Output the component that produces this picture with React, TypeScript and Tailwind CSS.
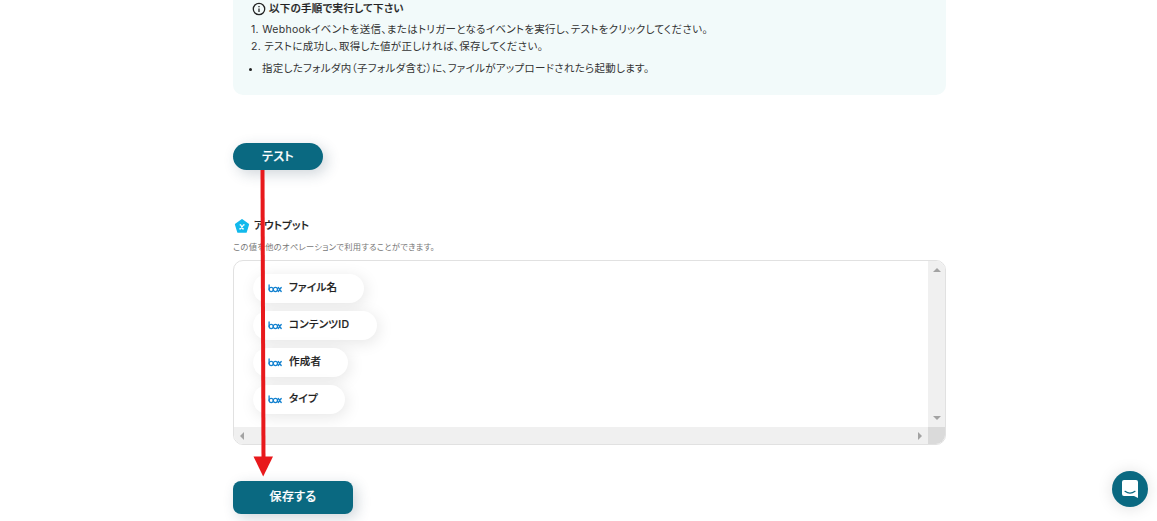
type OutputItem = {
  label: string;
  width: string;
};

const outputs: OutputItem[] = [
  { label: 'ファイル名', width: 'w-[111px]' },
  { label: 'コンテンツID', width: 'w-[124px]' },
  { label: '作成者', width: 'w-[95px]' },
  { label: 'タイプ', width: 'w-[92px]' },
];

function InfoIcon() {
  return (
    <svg width="14" height="14" viewBox="0 0 24 24" className="shrink-0" fill="none" stroke="#222" strokeWidth="2.2">
      <circle cx="12" cy="12" r="9.8" />
      <path d="M12 11v6" />
      <path d="M12 7v2" />
    </svg>
  );
}

function OutputIcon() {
  return (
    <svg width="16" height="16" viewBox="0 0 16 16" className="shrink-0">
      <path
        d="M8 1.9 14.3 6.5 12 14H4L1.7 6.5Z"
        fill="#12b9ec"
        stroke="#12b9ec"
        strokeWidth="1.6"
        strokeLinejoin="round"
      />
      <path
        d="M6.100 6.800h.6l2 4h.8M10.200 6.800h-.6L6.500 10.800h-.8"
        fill="none"
        stroke="#fff"
        strokeWidth="1.2"
        strokeLinecap="round"
      />
    </svg>
  );
}

function BoxLogo() {
  return (
    <svg
      width="14"
      height="9"
      viewBox="0 0 14 9"
      className="shrink-0"
      fill="none"
      stroke="#1482d0"
      strokeWidth="1.3"
      strokeLinecap="round"
      strokeLinejoin="round"
    >
      <path d="M1.100 1v4.500" />
      <circle cx="3.200" cy="5.500" r="2.100" />
      <circle cx="7.400" cy="5.500" r="2.100" />
      <path d="m10.300 3.500 2.900 4M13.200 3.500l-2.900 4" />
    </svg>
  );
}

function Arrow({ d, className }: { d: string; className?: string }) {
  return (
    <svg width="8" height="8" viewBox="0 0 8 8" className={className}>
      <path d={d} fill="#a3a3a3" />
    </svg>
  );
}

function OutputPill({ label, width }: OutputItem) {
  return (
    <div
      className={`flex h-[29px] shrink-0 items-center rounded-full bg-white pl-[15px] shadow-[2px_3px_16px_rgba(0,0,0,0.1)] ${width}`}
    >
      <BoxLogo />
      <span className="-mt-[2px] ml-[7px] text-[10.5px] leading-4 font-medium [-webkit-text-stroke:0.2px]">{label}</span>
    </div>
  );
}

export default function App() {
  return (
    <div className="relative h-[521px] w-[1157px] overflow-hidden bg-white font-[Inter,'Noto_Sans_CJK_JP',sans-serif] tracking-[0.3px] whitespace-nowrap text-[#222] [font-feature-settings:'palt']">
      <main className="ml-[233px] w-[713px]">
        <section className="h-[95px] rounded-b-[10px] bg-[#f2fafa] pl-[18px] text-[10.5px]">
          <h2 className="flex h-[17px] items-center gap-[3px] pl-px font-medium [-webkit-text-stroke:0.2px]">
            <InfoIcon />
            以下の手順で実行して下さい
          </h2>
          <ol className="mt-1 leading-[17px] text-[#333]">
            <li>1. Webhookイベントを送信、またはトリガーとなるイベントを実行し、テストをクリックしてください。</li>
            <li>2. テストに成功し、取得した値が正しければ、保存してください。</li>
          </ol>
          <div className="mt-[5px] flex items-center leading-[17px] text-[#333]">
            <span className="mt-[2px] mr-[10px] -ml-[2px] size-[3px] rounded-full bg-[#222]" />
            指定したフォルダ内（子フォルダ含む）に、ファイルがアップロードされたら起動します。
          </div>
        </section>

        <button className="mt-12 block h-[27px] w-[90px] rounded-full bg-[#0a6981] pt-px text-[12px] font-medium text-white shadow-[4px_4px_14px_rgba(40,70,90,0.22)] [-webkit-text-stroke:0.2px]">
          テスト
        </button>

        <h3 className="mt-[48px] flex h-4 items-center gap-1 pl-px text-[10.5px] font-medium [-webkit-text-stroke:0.2px]">
          <OutputIcon />
          アウトプット
        </h3>
        <p className="mt-1.5 h-4 text-[8.25px] leading-[14px] text-[#777]">この値を他のオペレーションで利用することができます。</p>

        <section className="mt-1 flex h-[185px] flex-col overflow-hidden rounded-[10px] border border-[#e1e1e1]">
          <div className="flex h-[166px]">
            <div className="flex flex-1 flex-col gap-2 overflow-hidden pt-[13px] pl-[19px]">
              {outputs.map((item) => (
                <OutputPill key={item.label} {...item} />
              ))}
            </div>
            <div className="flex w-[17px] flex-col items-center justify-between bg-[#f0f0f0] py-[5px]">
              <Arrow d="M0 6 4 2 8 6Z" />
              <Arrow d="M0 2 4 6 8 2Z" />
            </div>
          </div>
          <div className="flex h-[17px]">
            <div className="flex flex-1 items-center justify-between bg-[#f0f0f0] px-1">
              <Arrow d="M6 0 2 4 6 8Z" />
              <Arrow d="M2 0 6 4 2 8Z" />
            </div>
            <div className="w-[17px] bg-[#dadada]" />
          </div>
        </section>

        <button className="mt-9 block h-[33px] w-[120px] rounded-[8px] bg-[#0a6981] pb-px text-[12px] font-medium text-white shadow-[4px_4px_14px_rgba(40,70,90,0.22)] [-webkit-text-stroke:0.2px]">
          保存する
        </button>
      </main>

      {/* Flow arrow from the test button to the save button */}
      <svg className="absolute top-[170px] left-[252px]" width="22" height="307" viewBox="0 0 22 307">
        <path d="M10.500 0 11.500 290" stroke="#e8191c" strokeWidth="4" />
        <path d="M1.500 286.500h19.500l-9.800 20Z" fill="#e8191c" />
      </svg>

      {/* Chat launcher */}
      <button className="absolute top-[471px] left-[1112px] flex size-9 items-center justify-center rounded-full bg-[#0a6981] shadow-[0_1px_16px_rgba(0,0,0,0.13)]">
        <svg width="16" height="18" viewBox="0 0 16 18">
          <path d="M2 0h12q2 0 2 2v16l-4-2H2q-2 0-2-2V2Q0 0 2 0Z" fill="#fff" />
          <path d="M3 11.300q5 3.500 10 0" fill="none" stroke="#0a6981" strokeWidth="1.200" strokeLinecap="round" />
        </svg>
      </button>
    </div>
  );
}
